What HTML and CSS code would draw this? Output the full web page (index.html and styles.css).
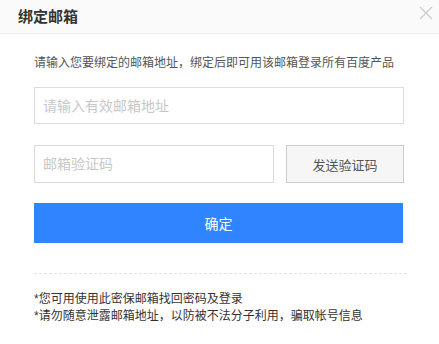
FILE: index.html
```html
<!DOCTYPE html>
<html lang="zh-CN">
<head>
  <meta charset="UTF-8" />
  <title>绑定邮箱</title>
  <link rel="stylesheet" href="styles.css">
</head>
<body>
  <div class="dialog">
    <header class="dialog-head">
      <h1 class="dialog-title">绑定邮箱</h1>
      <a href="#" class="dialog-close" aria-label="关闭">
        <svg width="14" height="14" viewBox="0 0 14 14"><path d="M1 1L13 13M13 1L1 13" stroke="#cccccc" stroke-width="1.3" fill="none"/></svg>
      </a>
    </header>

    <main class="dialog-body">
      <p class="desc">请输入您要绑定的邮箱地址，绑定后即可用该邮箱登录所有百度产品</p>

      <input class="field field-full" type="text" placeholder="请输入有效邮箱地址" />

      <div class="code-row">
        <input class="field field-code" type="text" placeholder="邮箱验证码" />
        <button class="btn-send" type="button">发送验证码</button>
      </div>

      <button class="btn-submit" type="button">确定</button>

      <div class="divider"></div>

      <ul class="notes">
        <li>*您可用使用此密保邮箱找回密码及登录</li>
        <li>*请勿随意泄露邮箱地址，以防被不法分子利用，骗取帐号信息</li>
      </ul>
    </main>
  </div>
</body>
</html>
```

FILE: styles.css
```css
/* Reset */
* {
  box-sizing: border-box;
  margin: 0;
  padding: 0;
}
body {
  font-family: "Liberation Sans", "Noto Sans CJK SC", sans-serif;
  background: #fff;
  color: #333;
  width: 439px;
  height: 344px;
}

.dialog-head {
  height: 34px;
  background: #fafafa;
  border-bottom: 1px solid #ededed;
  display: flex;
  align-items: center;
  justify-content: space-between;
  padding: 0 6px 0 18px;
}
.dialog-title {
  font-size: 15px;
  font-weight: 700;
  color: #333;
  line-height: 18px;
  margin-top: 1px;
}
.dialog-close {
  display: flex;
  width: 14px;
  height: 14px;
  margin-top: -7px;
}

.dialog-body {
  padding: 20px 35px 0 34px;
}
.desc {
  font-size: 12px;
  line-height: 18px;
  color: #555;
}

.field {
  display: block;
  height: 37px;
  border: 1px solid #dcdcdc;
  padding: 0 8px;
  font-size: 14px;
  font-family: inherit;
  color: #333;
  outline: none;
}
.field::placeholder {
  color: #c8c8c8;
}
.field-full {
  width: 370px;
  margin-top: 15px;
}

.code-row {
  display: flex;
  gap: 12px;
  margin-top: 21px;
}
.field-code {
  width: 240px;
  height: 38px;
}
.btn-send {
  width: 118px;
  height: 38px;
  background: #f6f6f6;
  border: 1px solid #cdcdcd;
  color: #555;
  font-size: 13px;
  font-family: inherit;
  cursor: pointer;
}

.btn-submit {
  display: block;
  width: 369px;
  height: 40px;
  margin-top: 20px;
  background: #3084ff;
  border: none;
  color: #fff;
  font-size: 14px;
  font-family: inherit;
  cursor: pointer;
}

.divider {
  width: 373px;
  margin-top: 30px;
  border-top: 1px dashed #e3e3e3;
}

.notes {
  list-style: none;
  margin-top: 17px;
  font-size: 12px;
  line-height: 17px;
  color: #333;
}
```
